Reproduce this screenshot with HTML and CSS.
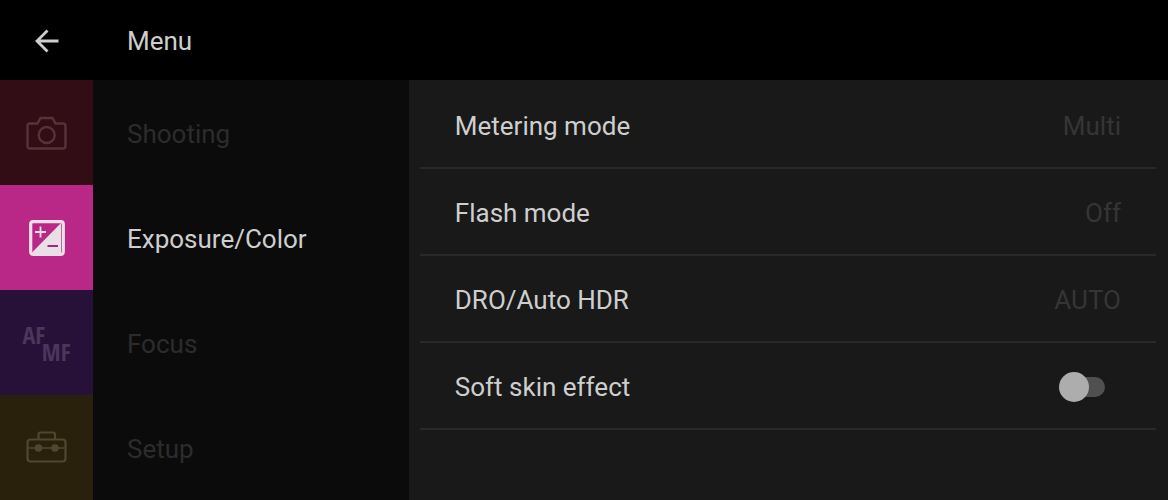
FILE: index.html
```html
<!DOCTYPE html>
<html lang="en">
<head>
  <meta charset="UTF-8" />
  <meta name="viewport" content="width=device-width, initial-scale=1" />
  <title>Menu</title>
  <link rel="stylesheet" href="styles.css">
</head>
<body>
  <header class="topbar">
    <button class="back" type="button" aria-label="Back">
      <svg width="26" height="26" viewBox="0 0 26 26" fill="none" stroke="currentColor" stroke-width="2.8">
        <path d="M13.500 2.500 3 13l10.500 10.500M3.500 13H24.500" />
      </svg>
    </button>
    <h1>Menu</h1>
  </header>

  <div class="content">
    <nav class="categories">
      <a class="category shooting" href="#shooting">
        <span class="tile">
          <svg width="42" height="36" viewBox="0 0 42 36" fill="none" stroke="currentColor" stroke-width="2.400">
            <path d="M4 8.500H11.500L14.500 3H26.500L29.500 8.500H37Q39.500 8.500 39.500 11V31Q39.500 33.500 37 33.500H4Q1.500 33.500 1.500 31V11Q1.500 8.500 4 8.500Z" />
            <circle cx="20.700" cy="20" r="8" />
          </svg>
        </span>
        <span class="name">Shooting</span>
      </a>
      <a class="category exposure active" href="#exposure" aria-current="page">
        <span class="tile">
          <svg width="36" height="36" viewBox="0 0 36 36">
            <rect x="1.700" y="1.700" width="32.600" height="32.600" rx="2.500" fill="none" stroke="currentColor" stroke-width="3.200" />
            <path d="M32 3V33H3.500V32Z" fill="currentColor" />
            <path d="M11.500 6.500V17.500M6 12H17" stroke="currentColor" stroke-width="1.800" />
            <path d="M18.500 26H29" stroke="#a8247f" stroke-width="2" />
          </svg>
        </span>
        <span class="name">Exposure/Color</span>
      </a>
      <a class="category focus" href="#focus">
        <span class="tile afmf"><span>AF</span><span class="mf">MF</span></span>
        <span class="name">Focus</span>
      </a>
      <a class="category setup" href="#setup">
        <span class="tile">
          <svg width="42" height="36" viewBox="0 0 42 36" fill="none" stroke="currentColor" stroke-width="2.200">
            <rect x="1.500" y="9.500" width="38" height="22" rx="3" />
            <path d="M12.500 9.500V4.500Q12.500 2.500 14.500 2.500H27Q29 2.500 29 4.500V9.500" />
            <path d="M2 18H39.500" stroke-width="1.400" />
            <circle cx="12.500" cy="18" r="3.800" fill="currentColor" stroke="none" />
            <circle cx="29" cy="18" r="3.800" fill="currentColor" stroke="none" />
          </svg>
        </span>
        <span class="name">Setup</span>
      </a>
    </nav>

    <main class="settings">
      <button class="setting" type="button"><span>Metering mode</span><span class="value">Multi</span></button>
      <button class="setting" type="button"><span>Flash mode</span><span class="value">Off</span></button>
      <button class="setting" type="button"><span>DRO/Auto HDR</span><span class="value">AUTO</span></button>
      <div class="setting">
        <label for="softSkin">Soft skin effect</label>
        <input class="switch" id="softSkin" type="checkbox" role="switch">
      </div>
    </main>
  </div>
</body>
</html>
```

FILE: styles.css
```css
* { box-sizing: border-box; }
body {
  display: flex;
  flex-direction: column;
  min-height: 100vh;
  margin: 0;
  background: #000;
  color: #cecece;
  font: 26px/32px Roboto, sans-serif;
}
button { padding: 0; border: 0; background: none; color: inherit; font: inherit; cursor: pointer; }
svg { display: block; }

.topbar { display: flex; align-items: center; height: 80px; padding-top: 2px; }
.back { display: flex; justify-content: center; width: 93px; }
.topbar h1 { margin: 0 0 0 34px; font: inherit; }

.content { display: flex; flex: 1; }

.categories { display: flex; flex-direction: column; flex: 0 0 35%; background: #0b0b0b; }
.category { display: flex; flex: 1; align-items: center; gap: 34px; min-height: 96px; color: #2c2c2c; text-decoration: none; }
.category.active { color: #cecece; }
.tile { display: flex; flex: 0 0 93px; align-items: center; justify-content: center; align-self: stretch; }
.name { padding-top: 2px; }
.shooting .tile { background: #330d16; color: #583139; }
.exposure .tile { background: #b92887; color: #e9dfe6; }
.focus .tile { background: #281139; color: #4c3659; }
.setup .tile { background: #2a210c; color: #50472f; }

.afmf { flex-direction: column; font: bold 24px/17px "Liberation Sans Narrow", "Open Sans Condensed", Roboto, sans-serif; }
.afmf span { width: 48px; }
.afmf .mf { text-align: right; }

.settings { flex: 1; padding: 2px 12px 0 11px; background: #191919; }
.setting {
  display: flex;
  align-items: center;
  justify-content: space-between;
  width: 100%;
  height: 87px;
  padding: 2px 35px 0;
  border-bottom: 2px solid #292929;
}
.value { color: #353535; }

.switch {
  appearance: none;
  display: flex;
  align-items: center;
  width: 44px;
  height: 20px;
  margin: 0 16px 0 0;
  border-radius: 10px;
  background: #505050;
  cursor: pointer;
}
.switch::before { content: ""; width: 30px; height: 30px; margin-left: -2px; border-radius: 50%; background: #adadad; }
.switch:checked { justify-content: flex-end; }
```
